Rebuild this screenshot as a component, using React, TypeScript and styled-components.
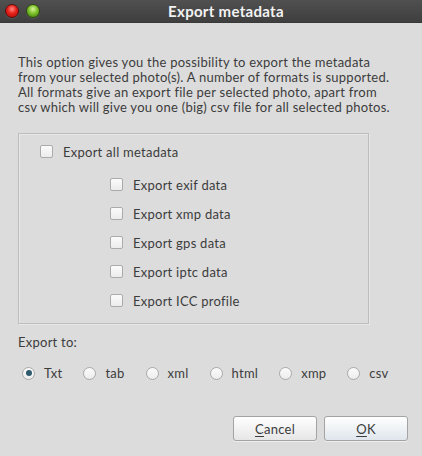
import React from "react";
import styled, { createGlobalStyle } from "styled-components";

const Global = createGlobalStyle`
  html, body { margin: 0; padding: 0; background: #dcdcdc; }
  * { box-sizing: border-box; }
`;

const Window = styled.div`
  width: 422px;
  height: 456px;
  display: flex;
  flex-direction: column;
  background: #dcdcdc;
  font-family: Lato, "Open Sans", sans-serif;
  font-size: 13px;
  letter-spacing: 0.25px;
  color: #3c3c3c;
  overflow: hidden;
`;

const TitleBar = styled.div`
  height: 23px;
  flex: none;
  display: flex;
  align-items: center;
  padding-left: 5px;
  background: linear-gradient(#505050, #3f3f3f);
  border-bottom: 1px solid #3a3a3a;
`;

const Controls = styled.div`
  display: flex;
  gap: 7px;
`;

const Dot = styled.span<{ $color: "red" | "green" }>`
  width: 14px;
  height: 14px;
  border-radius: 50%;
  border: 1px solid ${(p) => (p.$color === "red" ? "#5a1010" : "#2f4a10")};
  background: ${(p) =>
    p.$color === "red"
      ? "radial-gradient(circle at 50% 35%, #ff8a80 0%, #e8201a 45%, #a80c08 100%)"
      : "radial-gradient(circle at 50% 35%, #d8f59a 0%, #7cc02a 45%, #3f7a10 100%)"};
  box-shadow: 0 1px 0 rgba(255, 255, 255, 0.1);
`;

const Title = styled.div`
  flex: 1;
  text-align: center;
  padding-right: 10px;
  color: #f2f2f2;
  font-weight: bold;
  font-size: 15px;
  letter-spacing: 0.3px;
`;

const Content = styled.div`
  flex: 1;
  display: flex;
  flex-direction: column;
  padding: 0 14px 0 18px;
`;

const Description = styled.p`
  margin: 32px 0 0;
  line-height: 15px;
  white-space: pre-line;
`;

const Group = styled.div`
  margin-top: 18px;
  width: 351px;
  height: 191px;
  border: 1px solid #bdbdbd;
  box-shadow: inset 1px 1px 0 #e8e8e8, 1px 1px 0 #e8e8e8;
  padding: 3px 0 0 21px;
`;

const SubList = styled.div`
  margin-top: 4px;
  padding-left: 70px;
`;

const CheckRow = styled.label`
  height: 29px;
  display: flex;
  align-items: center;
  gap: 10px;
`;

const Box = styled.span`
  width: 13px;
  height: 13px;
  border: 1px solid #ababab;
  border-radius: 2px;
  background: linear-gradient(#fbfbfb, #ececec);
`;

const ExportLabel = styled.div`
  margin-top: 11px;
  line-height: 15px;
`;

const RadioRow = styled.div`
  margin-top: 13px;
  height: 20px;
  display: flex;
  align-items: center;
  padding-left: 4px;
  gap: 21px;
`;

const RadioItem = styled.label`
  display: flex;
  align-items: center;
  gap: 9px;
`;

const Radio = styled.span<{ $checked?: boolean }>`
  width: 13px;
  height: 13px;
  border-radius: 50%;
  border: 1px solid #a9a9a9;
  background: linear-gradient(#fbfbfb, #ececec);
  display: flex;
  align-items: center;
  justify-content: center;
  &::after {
    content: "";
    width: 6px;
    height: 6px;
    border-radius: 50%;
    background: ${(p) => (p.$checked ? "#2e5a6e" : "transparent")};
  }
`;

const ButtonRow = styled.div`
  margin-top: 33px;
  display: flex;
  justify-content: flex-end;
  gap: 7px;
`;

const Button = styled.button<{ $default?: boolean }>`
  width: 84px;
  height: 25px;
  border: 1px solid #a3a3a3;
  border-radius: 3px;
  background: ${(p) =>
    p.$default
      ? "linear-gradient(#ffffff, #dfe6ec)"
      : "linear-gradient(#ffffff, #e6e6e6)"};
  font-family: inherit;
  font-size: 13px;
  letter-spacing: 0.25px;
  color: #3c3c3c;
  padding: 0;
  box-shadow: 0 1px 0 rgba(255, 255, 255, 0.5);
  u { text-decoration: underline; text-underline-offset: 2px; }
`;

const subs = [
  "Export exif data",
  "Export xmp data",
  "Export gps data",
  "Export iptc data",
  "Export ICC profile",
];

const formats = ["Txt", "tab", "xml", "html", "xmp", "csv"];

export default function App() {
  return (
    <>
      <Global />
      <Window>
        <TitleBar>
          <Controls>
            <Dot $color="red" />
            <Dot $color="green" />
          </Controls>
          <Title>Export metadata</Title>
        </TitleBar>
        <Content>
          <Description>
            {"This option gives you the possibility to export the metadata\nfrom your selected photo(s). A number of formats is supported.\nAll formats give an export file per selected photo, apart from\ncsv which will give you one (big) csv file for all selected photos."}
          </Description>
          <Group>
            <CheckRow>
              <Box />
              Export all metadata
            </CheckRow>
            <SubList>
              {subs.map((s) => (
                <CheckRow key={s}>
                  <Box />
                  {s}
                </CheckRow>
              ))}
            </SubList>
          </Group>
          <ExportLabel>Export to:</ExportLabel>
          <RadioRow>
            {formats.map((f, i) => (
              <RadioItem key={f}>
                <Radio $checked={i === 0} />
                {f}
              </RadioItem>
            ))}
          </RadioRow>
          <ButtonRow>
            <Button>
              <u>C</u>ancel
            </Button>
            <Button $default>
              <u>O</u>K
            </Button>
          </ButtonRow>
        </Content>
      </Window>
    </>
  );
}
